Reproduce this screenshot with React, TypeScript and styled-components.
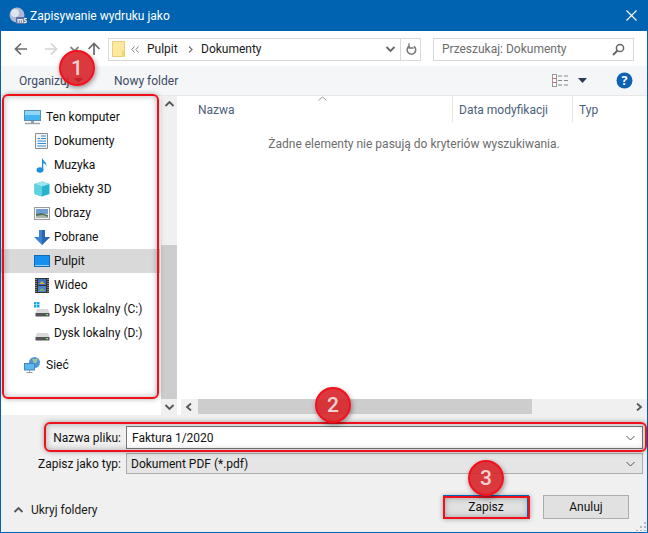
import React from "react";
import styled, { createGlobalStyle } from "styled-components";

const Global = createGlobalStyle`
  html, body { margin: 0; padding: 0; background: #fff; }
  * { box-sizing: border-box; }
  #root { width: 648px; height: 533px; overflow: hidden; }
`;

const Window = styled.div`
  position: relative; width: 648px; height: 533px;
  border: 1px solid #0063b1; border-top: 0;
  display: flex; flex-direction: column;
  background: #f0f0f0;
  font-family: Roboto, "Open Sans", sans-serif; font-size: 12px; color: #1a1a1a;
`;
const TitleBar = styled.div`
  height: 31px; flex: none; background: #0063b1; color: #fff;
  display: flex; align-items: center; padding: 0 10px 0 8px; gap: 3px;
`;
const TitleText = styled.span`flex: 1; font-size: 12px;`;
const NavBar = styled.div`
  height: 35px; flex: none; background: #fff; display: flex; align-items: center;
  padding: 1px 13px 0 13px;
`;
const NavButtons = styled.div`width: 94px; flex: none; display: flex; align-items: center;`;
const NavBtn = styled.span<{ $w: number }>`width: ${p => p.$w}px; display: flex; flex: none; justify-content: flex-start;`;
const AddressBar = styled.div`
  width: 313px; height: 23px; flex: none; border: 1px solid #d9d9d9; background: #fff;
  display: flex; align-items: center; padding-left: 3px;
`;
const Crumbs = styled.div`flex: 1; display: flex; align-items: center; color: #1a1a1a; padding-left: 6px;`;
const Crumb = styled.span<{ $w: number }>`width: ${p => p.$w}px; flex: none;`;
const BackMark = styled.svg`flex: none; margin-right: 8px;`;
const CrumbSep = styled.svg`flex: none; margin: 0 8px 0 9px;`;
const AddrEnd = styled.div`
  width: 20px; height: 21px; border-left: 1px solid #d9d9d9; display: flex; align-items: center; justify-content: center; margin-left: 4px;
`;
const SearchBox = styled.div`
  width: 201px; height: 23px; flex: none; margin-left: 12px; border: 1px solid #d9d9d9;
  display: flex; align-items: center; justify-content: space-between; padding: 0 8px; color: #6d6d6d;
`;
const CommandBar = styled.div`
  height: 30px; flex: none; background: #f5f6f7; border-bottom: 1px solid #e8e8e8;
  display: flex; align-items: center; padding: 0 14px 0 18px; color: #3b4a63;
`;
const Cmd = styled.span<{ $w: number }>`width: ${p => p.$w}px; flex: none; display: flex; align-items: center; gap: 5px;`;
const CmdSpacer = styled.div`flex: 1;`;
const ViewIcons = styled.div`display: flex; align-items: center; gap: 9px; margin-right: 29px;`;
const Body = styled.div`height: 319px; flex: none; display: flex; background: #fff;`;
const NavPane = styled.div`width: 159px; flex: none; padding-top: 9px; display: flex; flex-direction: column;`;
const TreeRow = styled.div<{ $child?: boolean; $selected?: boolean; $gapTop?: number }>`
  height: 24px; flex: none; display: flex; align-items: center;
  margin-top: ${p => p.$gapTop ?? 0}px;
  padding-left: ${p => (p.$child ? 32 : 23)}px;
  gap: ${p => (p.$child ? 4 : 5)}px;
  background: ${p => (p.$selected ? "#d9d9d9" : "transparent")};
  color: #111;
`;
const IconSlot = styled.span`width: 17px; height: 17px; flex: none; display: flex; align-items: center; justify-content: center;`;
const VScroll = styled.div`
  width: 16px; flex: none; margin-left: 1px; background: #f0f0f0; display: flex; flex-direction: column;
`;
const ScrollArrow = styled.div<{ $w?: number }>`
  height: 16px; width: ${p => p.$w ?? 16}px; flex: none; display: flex; align-items: center; justify-content: center; background: #f0f0f0;
`;
const VTrack = styled.div`flex: 1; display: flex; flex-direction: column; justify-content: flex-end;`;
const VThumb = styled.div`height: 154px; background: #cdcdcd;`;
const Content = styled.div`flex: 1; margin-left: 4px; display: flex; flex-direction: column; min-width: 0;`;
const Header = styled.div`height: 26px; flex: none; display: flex; color: #4c607a; position: relative;`;
const HeaderCell = styled.div<{ $w: number; $sep?: boolean }>`
  width: ${p => p.$w}px; flex: none; padding-left: ${p => (p.$sep ? 6 : 17)}px; padding-top: 7px;
  border-right: ${p => (p.$sep ? "0" : "1px solid #e5e5e5")};
`;
const HeaderSep = styled.div<{ $w: number }>`
  width: ${p => p.$w}px; flex: none; padding-left: 6px; padding-top: 7px; border-right: 1px solid #e5e5e5;
`;
const SortCaret = styled.svg`position: absolute; left: 137px; top: 0;`;
const Empty = styled.div`flex: 1; text-align: center; color: #6d6d6d; padding-top: 15px;`;
const HScroll = styled.div`height: 16px; flex: none; display: flex; background: #f0f0f0;`;
const HThumb = styled.div`width: 334px; height: 15px; background: #cdcdcd; flex: none;`;
const HSpace = styled.div`flex: 1;`;
const Bottom = styled.div`flex: 1; display: flex; flex-direction: column; padding-top: 11px; position: relative;`;
const FormRow = styled.div<{ $mt?: number }>`display: flex; align-items: center; margin-top: ${p => p.$mt ?? 0}px;`;
const Label = styled.div`width: 120px; flex: none; text-align: right; color: #111;`;
const Field = styled.div<{ $combo?: boolean; $h: number }>`
  width: 517px; height: ${p => p.$h}px; margin-left: 5px; flex: none;
  display: flex; align-items: center; justify-content: space-between;
  padding: 0 6px 0 ${p => (p.$combo ? 4 : 5)}px;
  background: ${p => (p.$combo ? "#e5e5e5" : "#fff")};
  border: 1px solid ${p => (p.$combo ? "#adadad" : "#7a7a7a")};
  color: #111;
`;
const Footer = styled.div`flex: 1; display: flex; align-items: flex-start; padding: 21px 18px 0 12px; position: relative;`;
const Toggle = styled.div`display: flex; align-items: center; gap: 7px; color: #1a1a1a; padding-top: 8px;`;
const Spring = styled.div`flex: 1;`;
const Button = styled.div<{ $primary?: boolean }>`
  width: 86px; height: 24px; flex: none; margin-left: 14px;
  display: flex; align-items: center; justify-content: center;
  background: #e1e1e1; color: #111;
  border: ${p => (p.$primary ? "2px solid #0078d7" : "1px solid #adadad")};
`;
const Grip = styled.svg`position: absolute; right: 1px; bottom: 1px;`;

const Overlay = styled.div`position: absolute; inset: 0 -1px -1px -1px; pointer-events: none;`;
const Frame = styled.div<{ $x: number; $y: number; $w: number; $h: number; $r: number }>`
  position: absolute; left: ${p => p.$x}px; top: ${p => p.$y}px; width: ${p => p.$w}px; height: ${p => p.$h}px;
  border: 2px solid #f0101a; border-radius: ${p => p.$r}px;
  box-shadow: 0 0 5px rgba(0,0,0,.35), inset 0 0 6px rgba(0,0,0,.3);
`;
const Badge = styled.div<{ $x: number; $y: number }>`
  position: absolute; left: ${p => p.$x}px; top: ${p => p.$y}px; width: 36px; height: 36px; border-radius: 50%;
  background: rgba(216, 36, 42, .9); border: 2px solid #f2101c; color: #f0d4d4;
  display: flex; align-items: center; justify-content: center;
  font-family: Roboto, sans-serif; font-size: 21px; font-weight: 500;
  box-shadow: 1px 2px 5px rgba(0,0,0,.4);
`;

const Chevron = ({ d, c = "#666", sw = 1.8 }: { d: string; c?: string; sw?: number }) => (
  <svg width="11" height="8" viewBox="0 0 11 8"><path d={d} fill="none" stroke={c} strokeWidth={sw} /></svg>
);
const DOWN = "M1.5 2L5.5 6L9.5 2";
const UP = "M1.5 6L5.5 2L9.5 6";

const AppIcon = () => (
  <svg width="18" height="18" viewBox="0 0 18 18" style={{ flex: "none" }}>
    <circle cx="8" cy="8" r="7.5" fill="#aebad4" />
    <circle cx="6" cy="6" r="4" fill="#dfe5f0" />
    <rect x="7" y="10" width="10" height="7" rx="1" fill="#5d6f9c" />
    <text x="8" y="16" fontSize="6.5" fill="#fff" fontFamily="Open Sans" fontWeight="700">mS</text>
  </svg>
);
const CloseIcon = () => (
  <svg width="11" height="11" viewBox="0 0 11 11"><path d="M.5.5L10.5 10.5M10.5.5L.5 10.5" stroke="#fff" strokeWidth="1.1" /></svg>
);
const ArrowIcon = ({ dir, c }: { dir: "l" | "r" | "u"; c: string }) => {
  const rot = dir === "l" ? 0 : dir === "r" ? 180 : 90;
  return (
    <svg width="14" height="14" viewBox="0 0 14 14">
      <path transform={`rotate(${rot} 7 7)`} d="M1.5 7H13M7 1.5L1.5 7L7 12.5" fill="none" stroke={c} strokeWidth="1.7" />
    </svg>
  );
};
const FolderSmall = () => (
  <svg width="13" height="16" viewBox="0 0 13 16">
    <path d="M.5.5H12.5V15.5H.5Z" fill="#fde99d" stroke="#e8cf78" />
    <path d="M10 9.5H12.5V15.5H10Z" fill="#f5d770" />
  </svg>
);
const Refresh = () => (
  <svg width="12" height="13" viewBox="0 0 12 13">
    <path d="M4.5 3A4.3 4.3 0 1 0 9 3.4" fill="none" stroke="#777" strokeWidth="1.5" />
    <path d="M4 .2V5H8.6" fill="none" stroke="#777" strokeWidth="1.3" />
  </svg>
);
const SearchIcon = () => (
  <svg width="13" height="13" viewBox="0 0 13 13">
    <circle cx="8" cy="5" r="3.6" fill="none" stroke="#666" strokeWidth="1.5" />
    <path d="M5.5 7.5L1 12" stroke="#666" strokeWidth="2" />
  </svg>
);
const ViewIcon = () => (
  <svg width="17" height="13" viewBox="0 0 17 13">
    <rect x=".5" y=".5" width="4" height="12" fill="#fff" stroke="#999" />
    <path d="M1 4.5H4M1 8.5H4" stroke="#c66" strokeWidth="1" />
    <path d="M6 2H10M12 2H16M6 6.5H10M12 6.5H16M6 11H10M12 11H16" stroke="#888" strokeWidth="1" />
  </svg>
);
const TriDown = ({ c }: { c: string }) => (
  <svg width="9" height="5" viewBox="0 0 9 5"><path d="M0 0H9L4.5 5Z" fill={c} /></svg>
);
const HelpIcon = () => (
  <svg width="17" height="17" viewBox="0 0 17 17">
    <circle cx="8.5" cy="8.5" r="8" fill="#0d62b5" />
    <text x="8.5" y="13" textAnchor="middle" fontSize="12.5" fontWeight="700" fill="#fff" fontFamily="Open Sans">?</text>
  </svg>
);
const Computer = () => (
  <svg width="17" height="15" viewBox="0 0 17 15">
    <rect x=".5" y=".5" width="16" height="10" fill="#45b4f2" stroke="#5b8fb5" />
    <rect x="1" y="1" width="15" height="4" fill="#8fd6f8" />
    <path d="M7 11H10V13H7Z" fill="#999" />
    <path d="M1 13.5H16" stroke="#9aa3ad" strokeWidth="1.5" />
  </svg>
);
const Docs = () => (
  <svg width="13" height="16" viewBox="0 0 13 16">
    <path d="M.5.5H12.5V15.5H.5Z" fill="#f4f4f4" stroke="#8c8c8c" />
    <path d="M6 3H11M2.5 5.5H5M6 5.5H11M2.5 8H11M2.5 10.5H11M2.5 13H11" stroke="#2f8fd8" strokeWidth="1" />
  </svg>
);
const Music = () => (
  <svg width="12" height="16" viewBox="0 0 12 16">
    <ellipse cx="4" cy="13" rx="3.5" ry="2.7" fill="#1e8fe0" />
    <path d="M6 13V.5C7 4 11 5 10.5 9.5C10 7 8 6.5 7.3 6V13Z" fill="#1e8fe0" />
  </svg>
);
const Cube = () => (
  <svg width="16" height="16" viewBox="0 0 16 16">
    <path d="M8 .5L15.5 3V13L8 15.5L.5 13V3Z" fill="#27b3cc" />
    <path d="M.5 3L8 5.5L15.5 3L8 .5Z" fill="#9ae7ee" />
    <path d="M8 5.5V15.5L.5 13V3Z" fill="#5ed2e0" />
  </svg>
);
const Pics = () => (
  <svg width="16" height="13" viewBox="0 0 16 13">
    <rect x=".5" y=".5" width="15" height="12" fill="#f5f5f5" stroke="#9a9a9a" />
    <rect x="2" y="2" width="12" height="5" fill="#6f9fd0" />
    <path d="M2 7L7 6L14 8V11H2Z" fill="#566f5a" />
    <path d="M2 9L9 8L14 10V11H2Z" fill="#a9b8a8" />
  </svg>
);
const Download = () => (
  <svg width="16" height="15" viewBox="0 0 16 15">
    <path d="M5 0H11V7H16L8 15L0 7H5Z" fill="#3c84d4" />
    <path d="M8 0H11V7H16L8 15Z" fill="#2a68b4" />
  </svg>
);
const Desktop = () => (
  <svg width="16" height="12" viewBox="0 0 16 12">
    <rect x=".5" y=".5" width="15" height="11" fill="#1690ee" stroke="#0f6bb8" />
    <path d="M1 10.5H15" stroke="#8dd2fa" />
  </svg>
);
const Film = () => (
  <svg width="14" height="15" viewBox="0 0 14 15">
    <rect width="14" height="15" fill="#333" />
    <path d="M1 1V14M13 1V14" stroke="#ccc" strokeWidth="1" strokeDasharray="1 1" />
    <rect x="3" y="1" width="8" height="6" fill="#3a6fc0" />
    <rect x="3" y="8" width="8" height="6" fill="#4a80cc" />
    <path d="M4 6L7 3L10 6Z" fill="#d8b03c" />
    <path d="M4 13L7 10L10 13Z" fill="#7fae4c" />
  </svg>
);
const Drive = ({ win }: { win?: boolean }) => (
  <svg width="16" height="15" viewBox="0 0 16 15">
    {win && <path d="M0 0H2.5V2.5H0ZM3 0H5.5V2.5H3ZM0 3H2.5V5.5H0ZM3 3H5.5V5.5H3Z" fill="#19a7ee" />}
    <path d="M3 7H14L15.5 11H1.5Z" fill="#d9d9d9" />
    <rect x="1.5" y="11" width="14" height="3.5" fill="#555" />
    <rect x="12" y="12" width="2" height="1.3" fill="#6ee06e" />
  </svg>
);
const Network = () => (
  <svg width="17" height="16" viewBox="0 0 17 16">
    <circle cx="10.5" cy="5.5" r="5.5" fill="#4f95d8" />
    <path d="M8 1.5C10 2.5 12 1.5 14 1.5L13 5L10 7Z" fill="#9ec3a0" />
    <rect x=".5" y="6.5" width="10" height="6.5" fill="#5ab9f0" stroke="#4a87b5" />
    <path d="M5.5 13V15M2.5 15.5H8.5" stroke="#9aa3ad" strokeWidth="1" />
  </svg>
);

const items: { label: string; icon: React.ReactNode; child?: boolean; selected?: boolean; gapTop?: number }[] = [
  { label: "Ten komputer", icon: <Computer /> },
  { label: "Dokumenty", icon: <Docs />, child: true },
  { label: "Muzyka", icon: <Music />, child: true },
  { label: "Obiekty 3D", icon: <Cube />, child: true },
  { label: "Obrazy", icon: <Pics />, child: true },
  { label: "Pobrane", icon: <Download />, child: true },
  { label: "Pulpit", icon: <Desktop />, child: true, selected: true },
  { label: "Wideo", icon: <Film />, child: true },
  { label: "Dysk lokalny (C:)", icon: <Drive win />, child: true },
  { label: "Dysk lokalny (D:)", icon: <Drive />, child: true },
  { label: "Sieć", icon: <Network />, gapTop: 8 },
];

export default function App() {
  return (
    <Window>
      <Global />
      <TitleBar>
        <AppIcon />
        <TitleText>Zapisywanie wydruku jako</TitleText>
        <CloseIcon />
      </TitleBar>
      <NavBar>
        <NavButtons>
          <NavBtn $w={30}><ArrowIcon dir="l" c="#6b6b6b" /></NavBtn>
          <NavBtn $w={25}><ArrowIcon dir="r" c="#d4d4d4" /></NavBtn>
          <NavBtn $w={18}><Chevron d={DOWN} c="#8a8a8a" /></NavBtn>
          <NavBtn $w={21}><ArrowIcon dir="u" c="#6b6b6b" /></NavBtn>
        </NavButtons>
        <AddressBar>
          <FolderSmall />
          <Crumbs>
            <BackMark width="8" height="7" viewBox="0 0 8 7">
              <path d="M3.5 .5L.8 3.5L3.5 6.5M7.5 .5L4.8 3.5L7.5 6.5" fill="none" stroke="#888" />
            </BackMark>
            <Crumb $w={32}>Pulpit</Crumb>
            <CrumbSep width="5" height="7" viewBox="0 0 5 7">
              <path d="M1 .5L4 3.5L1 6.5" fill="none" stroke="#777" strokeWidth="1.3" />
            </CrumbSep>
            <Crumb $w={70}>Dokumenty</Crumb>
          </Crumbs>
          <Chevron d={DOWN} c="#666" />
          <AddrEnd><Refresh /></AddrEnd>
        </AddressBar>
        <SearchBox>
          <span>Przeszukaj: Dokumenty</span>
          <SearchIcon />
        </SearchBox>
      </NavBar>
      <CommandBar>
        <Cmd $w={95}>Organizuj<TriDown c="#1c2638" /></Cmd>
        <Cmd $w={80}>Nowy folder</Cmd>
        <CmdSpacer />
        <ViewIcons><ViewIcon /><TriDown c="#2a3a55" /></ViewIcons>
        <HelpIcon />
      </CommandBar>
      <Body>
        <NavPane>
          {items.map(i => (
            <TreeRow key={i.label} $child={i.child} $selected={i.selected} $gapTop={i.gapTop}>
              <IconSlot>{i.icon}</IconSlot>
              <span>{i.label}</span>
            </TreeRow>
          ))}
        </NavPane>
        <VScroll>
          <ScrollArrow><Chevron d={UP} c="#555" /></ScrollArrow>
          <VTrack><VThumb /></VTrack>
          <ScrollArrow><Chevron d={DOWN} c="#555" /></ScrollArrow>
        </VScroll>
        <Content>
          <Header>
            <HeaderCell $w={272}>Nazwa</HeaderCell>
            <HeaderSep $w={120}>Data modyfikacji</HeaderSep>
            <HeaderCell $w={60} $sep>Typ</HeaderCell>
            <SortCaret width="9" height="5" viewBox="0 0 9 5"><path d="M.5 4.5L4.5 1L8.5 4.5" fill="none" stroke="#999" /></SortCaret>
          </Header>
          <Empty>Żadne elementy nie pasują do kryteriów wyszukiwania.</Empty>
          <HScroll>
            <ScrollArrow $w={17}><Chevron d="M7 .5L3 4L7 7.5" c="#555" /></ScrollArrow>
            <HThumb />
            <HSpace />
            <ScrollArrow $w={16}><Chevron d="M3 .5L7 4L3 7.5" c="#555" /></ScrollArrow>
          </HScroll>
        </Content>
      </Body>
      <Bottom>
        <FormRow>
          <Label>Nazwa pliku:</Label>
          <Field $h={23}>
            <span>Faktura 1/2020</span>
            <Chevron d={DOWN} c="#555" sw={1} />
          </Field>
        </FormRow>
        <FormRow $mt={4}>
          <Label>Zapisz jako typ:</Label>
          <Field $combo $h={21}>
            <span>Dokument PDF (*.pdf)</span>
            <Chevron d={DOWN} c="#555" sw={1} />
          </Field>
        </FormRow>
        <Footer>
          <Toggle><Chevron d={UP} c="#555" /><span>Ukryj foldery</span></Toggle>
          <Spring />
          <Button $primary>Zapisz</Button>
          <Button>Anuluj</Button>
          <Grip width="10" height="10" viewBox="0 0 10 10"><path d="M8 1h2v2H8zM4 5h2v2H4zM8 5h2v2H8zM0 9h2v1H0zM4 9h2v1H4zM8 9h2v1H8z" fill="#b5b5b5" /></Grip>
        </Footer>
      </Bottom>
      <Overlay>
        <Frame $x={2} $y={94} $w={157} $h={305} $r={6} />
        <Frame $x={44} $y={422} $w={603} $h={30} $r={6} />
        <Frame $x={443} $y={496} $w={87} $h={23} $r={0} />
        <Badge $x={59} $y={50}>1</Badge>
        <Badge $x={315} $y={387}>2</Badge>
        <Badge $x={468} $y={460}>3</Badge>
      </Overlay>
    </Window>
  );
}
